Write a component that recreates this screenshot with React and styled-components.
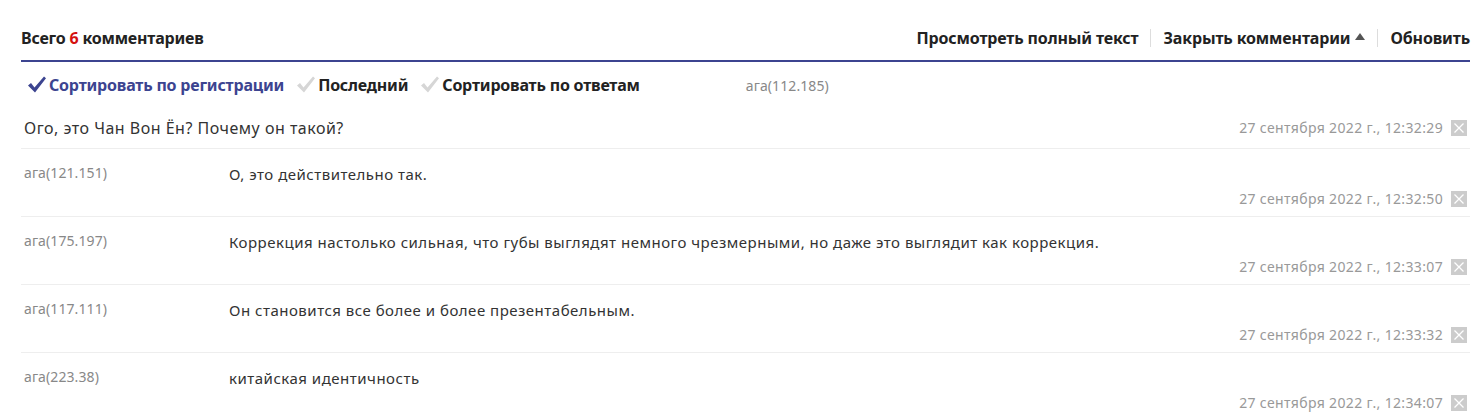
import styled, { createGlobalStyle } from 'styled-components';

const GlobalStyle = createGlobalStyle`
  body {
    margin: 0;
    background: #fff;
    font-family: "Noto Sans", "Open Sans", sans-serif;
  }
`;

const Page = styled.div`
  padding: 0 9px 0 21px;
`;

const Header = styled.div`
  display: flex;
  align-items: center;
  justify-content: space-between;
  height: 62px;
  padding-top: 15px;
  border-bottom: 2px solid #3c4490;
  box-sizing: border-box;
`;

const Title = styled.div`
  font-size: 16px;
  font-weight: 700;
  color: #222;
  letter-spacing: -0.2px;
`;

const Count = styled.span`
  color: #d4110f;
`;

const Actions = styled.div`
  display: flex;
  align-items: center;
  margin-right: -12px;
`;

const Action = styled.a`
  display: flex;
  align-items: center;
  gap: 5px;
  font-size: 16px;
  font-weight: 700;
  color: #222;
  letter-spacing: -0.15px;
  padding: 0 12px;
  line-height: 18px;
  cursor: pointer;
  & + & {
    border-left: 1px solid #ddd;
  }
`;

const Triangle = styled.span`
  width: 0;
  height: 0;
  border-left: 5px solid transparent;
  border-right: 5px solid transparent;
  border-bottom: 7px solid #555;
  margin-top: -2px;
`;

const SortBar = styled.div`
  display: flex;
  align-items: center;
  height: 46px;
  padding-left: 6px;
  box-sizing: border-box;
`;

const SortItem = styled.a`
  display: flex;
  align-items: center;
  gap: 2px;
  margin-right: 12px;
  font-size: 16px;
  font-weight: 700;
  letter-spacing: -0.2px;
  color: ${(p) => (p.active ? '#3c4490' : '#222')};
  cursor: pointer;
`;

const Author = styled.span`
  font-size: 14px;
  color: #888;
  letter-spacing: 0.1px;
`;

const SortAuthor = styled(Author)`
  margin-left: 94px;
`;

const Comment = styled.div`
  display: flex;
  align-items: center;
  justify-content: space-between;
  height: 40px;
  padding: 0 3px;
  border-bottom: 1px solid #eee;
`;

const Text = styled.div`
  font-size: 15px;
  color: #333;
  letter-spacing: 0.5px;
`;

const MainText = styled(Text)`
  font-size: 16px;
`;

const Meta = styled.div`
  display: flex;
  align-items: center;
  gap: 8px;
`;

const Date = styled.span`
  font-size: 14px;
  line-height: 20px;
  color: #999;
  letter-spacing: 0.35px;
`;

const CloseBox = styled.span`
  display: flex;
  align-items: center;
  justify-content: center;
  width: 16px;
  height: 16px;
  background: #ccc;
`;

const Reply = styled.div`
  display: grid;
  grid-template-columns: 205px 1fr;
  align-items: start;
  height: 68px;
  padding: 15px 3px 0 3px;
  box-sizing: border-box;
  border-bottom: 1px solid #eee;
`;

const ReplyAuthor = styled(Author)`
  line-height: 18px;
`;

const ReplyText = styled(Text)`
  line-height: 20px;
`;

const ReplyMeta = styled(Meta)`
  grid-column: 2;
  justify-self: end;
  margin-top: -2px;
`;

const Check = ({ color }) => (
  <svg width="20" height="18" viewBox="0 0 20 18">
    <path d="M1 9.5 L4 7 L7.5 11.5 L17 0.5 L19 2.2 L8 16.5 Z" fill={color} />
  </svg>
);

const Cross = () => (
  <svg width="12" height="12" viewBox="0 0 12 12">
    <path d="M1.5 1.5 L10.5 10.5 M10.5 1.5 L1.5 10.5" stroke="#fff" strokeWidth="1.3" />
  </svg>
);

const replies = [
  { author: 'ага(121.151)', text: 'О, это действительно так.', date: '27 сентября 2022 г., 12:32:50' },
  {
    author: 'ага(175.197)',
    text: 'Коррекция настолько сильная, что губы выглядят немного чрезмерными, но даже это выглядит как коррекция.',
    date: '27 сентября 2022 г., 12:33:07',
  },
  { author: 'ага(117.111)', text: 'Он становится все более и более презентабельным.', date: '27 сентября 2022 г., 12:33:32' },
  { author: 'ага(223.38)', text: 'китайская идентичность', date: '27 сентября 2022 г., 12:34:07' },
];

const sorts = [
  { label: 'Сортировать по регистрации', active: true },
  { label: 'Последний', active: false },
  { label: 'Сортировать по ответам', active: false },
];

export default function App() {
  return (
    <Page>
      <GlobalStyle />
      <Header>
        <Title>
          Всего <Count>6</Count> комментариев
        </Title>
        <Actions>
          <Action>Просмотреть полный текст</Action>
          <Action>
            Закрыть комментарии <Triangle />
          </Action>
          <Action>Обновить</Action>
        </Actions>
      </Header>
      <SortBar>
        {sorts.map((s) => (
          <SortItem key={s.label} active={s.active}>
            <Check color={s.active ? '#3c4490' : '#d6d6d6'} />
            {s.label}
          </SortItem>
        ))}
        <SortAuthor>ага(112.185)</SortAuthor>
      </SortBar>
      <Comment>
        <MainText>Ого, это Чан Вон Ён? Почему он такой?</MainText>
        <Meta>
          <Date>27 сентября 2022 г., 12:32:29</Date>
          <CloseBox>
            <Cross />
          </CloseBox>
        </Meta>
      </Comment>
      {replies.map((r) => (
        <Reply key={r.date}>
          <ReplyAuthor>{r.author}</ReplyAuthor>
          <ReplyText>{r.text}</ReplyText>
          <ReplyMeta>
            <Date>{r.date}</Date>
            <CloseBox>
              <Cross />
            </CloseBox>
          </ReplyMeta>
        </Reply>
      ))}
    </Page>
  );
}
